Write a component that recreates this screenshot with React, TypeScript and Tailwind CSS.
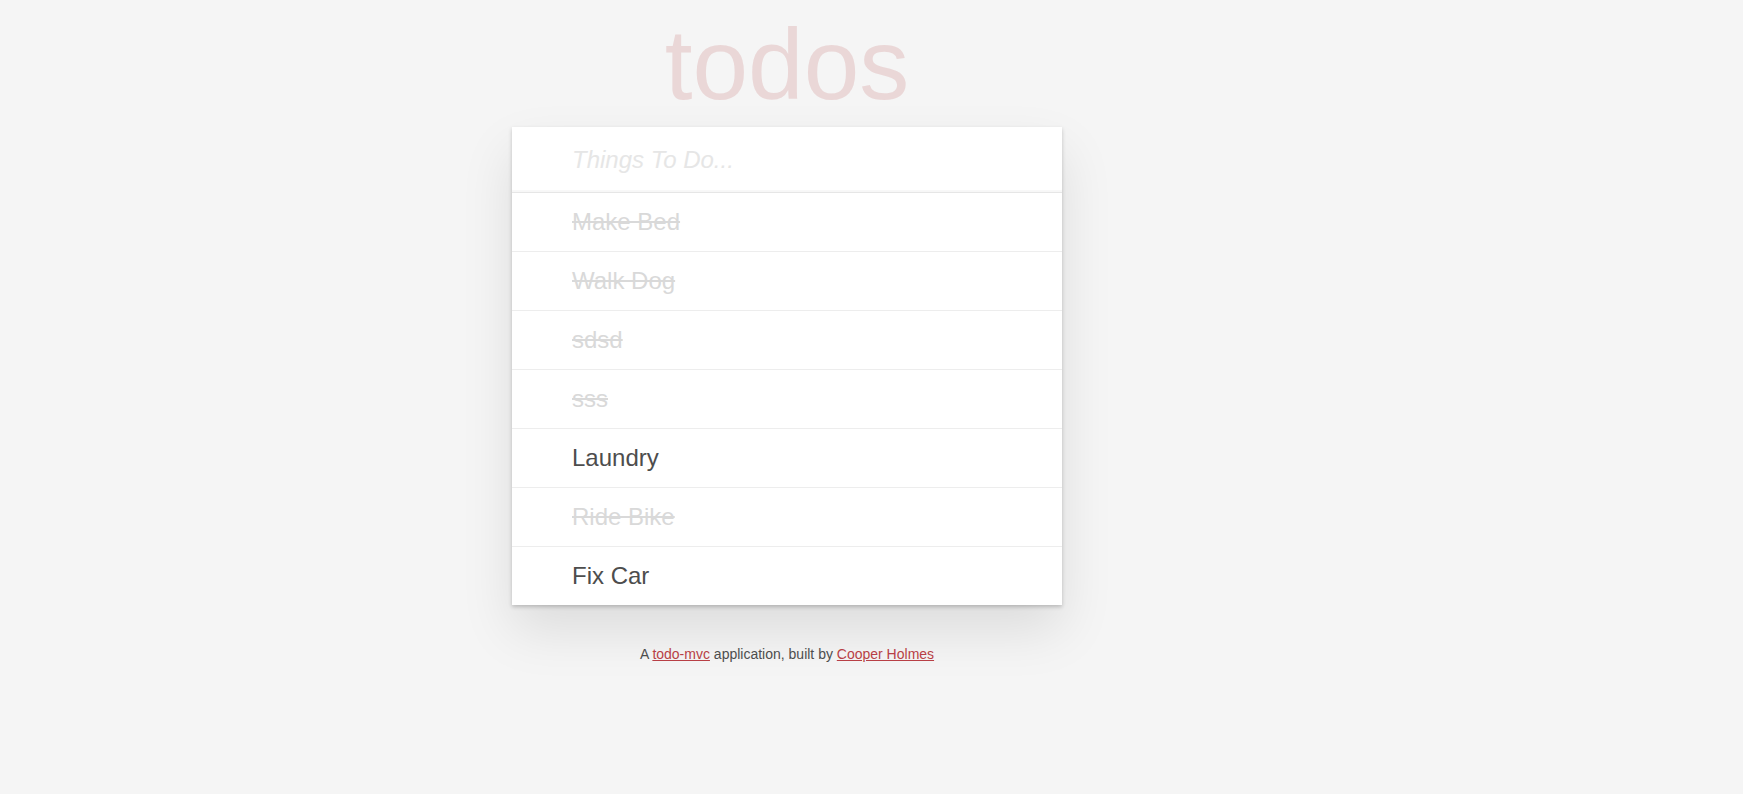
import React from "react"

type Todo = { id: number; text: string; done: boolean }

const todos: Todo[] = [
  { id: 1, text: "Make Bed", done: true },
  { id: 2, text: "Walk Dog", done: true },
  { id: 3, text: "sdsd", done: true },
  { id: 4, text: "sss", done: true },
  { id: 5, text: "Laundry", done: false },
  { id: 6, text: "Ride Bike", done: true },
  { id: 7, text: "Fix Car", done: false },
]

export default function App() {
  return (
    <div className="min-h-screen bg-[#f5f5f5] font-['Liberation_Sans',Arial,sans-serif] text-[#4d4d4d]">
      <div className="w-[1574px] flex flex-col items-center">
        <h1 className="pt-[14px] text-[100px] leading-[100px] text-[rgba(175,47,47,0.15)]">todos</h1>

        <section className="mt-[13px] w-[550px] bg-white shadow-[0_2px_4px_0_rgba(0,0,0,0.2),0_25px_50px_0_rgba(0,0,0,0.1)]">
          <input
            type="text"
            placeholder="Things To Do..."
            className="block w-full h-[65px] pl-[60px] pr-4 text-[24px] italic-placeholder outline-none bg-transparent shadow-[inset_0_-2px_1px_rgba(0,0,0,0.03)] placeholder:italic placeholder:text-[#e6e6e6]"
          />
          <ul className="border-t border-[#e6e6e6]">
            {todos.map((t, i) => (
              <li
                key={t.id}
                className={`${i < todos.length - 1 ? "border-b border-[#ededed]" : ""} py-[15px] pl-[60px] pr-[15px] text-[24px] leading-[28px] ${
                  t.done ? "text-[#d9d9d9] line-through" : "text-[#4d4d4d]"
                }`}
              >
                {t.text}
              </li>
            ))}
          </ul>
        </section>

        <footer className="mt-[41px] text-[14px] leading-[16px] text-[#4d4d4d]">
          A <a href="#" className="underline text-[#b83f45]">todo-mvc</a> application, built by{" "}
          <a href="#" className="underline text-[#b83f45]">Cooper Holmes</a>
        </footer>
      </div>
    </div>
  )
}
